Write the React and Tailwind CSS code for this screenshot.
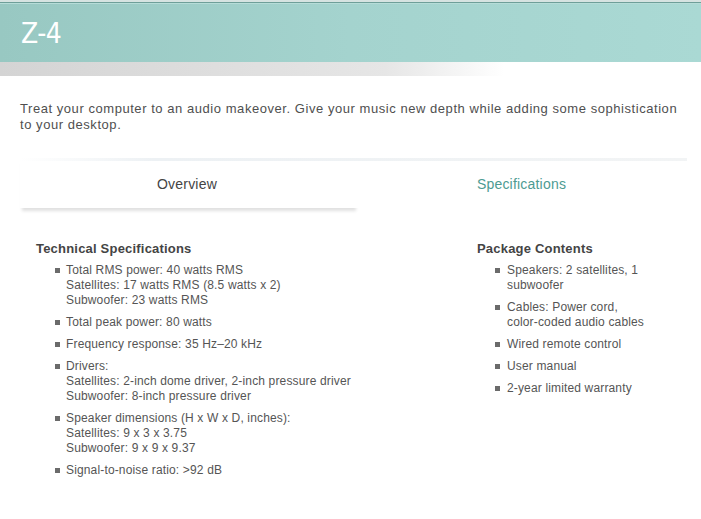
import React from 'react';

const techSpecs = [
  ['Total RMS power: 40 watts RMS', 'Satellites: 17 watts RMS (8.5 watts x 2)', 'Subwoofer: 23 watts RMS'],
  ['Total peak power: 80 watts'],
  ['Frequency response: 35 Hz–20 kHz'],
  ['Drivers:', 'Satellites: 2-inch dome driver, 2-inch pressure driver', 'Subwoofer: 8-inch pressure driver'],
  ['Speaker dimensions (H x W x D, inches):', 'Satellites: 9 x 3 x 3.75', 'Subwoofer: 9 x 9 x 9.37'],
  ['Signal-to-noise ratio: >92 dB'],
];

const packageContents = [
  'Speakers: 2 satellites, 1 subwoofer',
  'Cables: Power cord, color-coded audio cables',
  'Wired remote control',
  'User manual',
  '2-year limited warranty',
];

function Bullet() {
  return <span className="mt-[5px] h-[5px] w-[5px] shrink-0 bg-[#6b6b6b]" />;
}

export default function App() {
  return (
    <div className="w-[701px] h-[519px] overflow-hidden bg-white font-['Liberation_Sans',Arial,sans-serif] text-[#555]">
      {/* Header */}
      <div className="h-[2px] bg-[#d6e3e1]" />
      <div className="h-[1px] bg-[#6e9f99]" />
      <div className="h-[1px] bg-[#b6dcd8]" />
      <div className="h-[58px] bg-gradient-to-r from-[#98c8c2] via-[#a4d3ce] to-[#aad9d4] flex items-center pl-[21px]">
        <h1 className="text-[28px] leading-none text-white font-['DejaVu_Sans_Condensed','Liberation_Sans_Narrow',sans-serif] font-light tracking-[-0.5px] mt-[2px]">
          Z-4
        </h1>
      </div>
      <div className="h-[14px] bg-gradient-to-r from-[#d4d4d4] via-[#e6e6e6] via-55% to-white to-72%" />

      {/* Intro */}
      <p className="mt-[25px] pl-[20px] pr-[10px] text-[13px] leading-[16px] tracking-[0.55px] text-[#4f4f4f]">
        Treat your computer to an audio makeover. Give your music new depth while adding some sophistication to your desktop.
      </p>

      {/* Tabs */}
      <div className="mx-[20px] mt-[25px] w-[667px]">
        <div className="h-[3px] bg-gradient-to-r from-white via-[#edf1f4] via-20% to-[#f2f4f5]" />
        <div className="flex h-[47px]">
          <div className="w-[334px] flex items-center justify-center bg-white shadow-[2px_3px_3px_rgba(0,0,0,0.12)] text-[14px] tracking-[0.2px] text-[#444]">
            Overview
          </div>
          <div className="flex-1 flex items-center justify-center bg-white text-[14px] tracking-[0.2px] text-[#4d9b92] pl-[2px]">
            Specifications
          </div>
        </div>
      </div>

      {/* Spec columns */}
      <div className="flex mt-[33px]">
        <div className="pl-[36px] w-[477px]">
          <h2 className="text-[13px] font-bold text-[#444] leading-[16px] tracking-[0.2px]">Technical Specifications</h2>
          <ul className="mt-[6px] pl-[19px] flex flex-col gap-[7px]">
            {techSpecs.map((lines, i) => (
              <li key={i} className="flex gap-[6px] text-[12px] leading-[15px] tracking-[0.15px] text-[#555]">
                <Bullet />
                <div>
                  {lines.map((l, j) => (
                    <div key={j}>{l}</div>
                  ))}
                </div>
              </li>
            ))}
          </ul>
        </div>
        <div className="w-[200px]">
          <h2 className="text-[13px] font-bold text-[#444] leading-[16px] tracking-[0.2px]">Package Contents</h2>
          <ul className="mt-[6px] pl-[18px] flex flex-col gap-[7px]">
            {packageContents.map((t, i) => (
              <li key={i} className="flex gap-[7px] text-[12px] leading-[15px] tracking-[0.15px] text-[#555]">
                <Bullet />
                <div className="w-[142px]">{t}</div>
              </li>
            ))}
          </ul>
        </div>
      </div>
    </div>
  );
}
